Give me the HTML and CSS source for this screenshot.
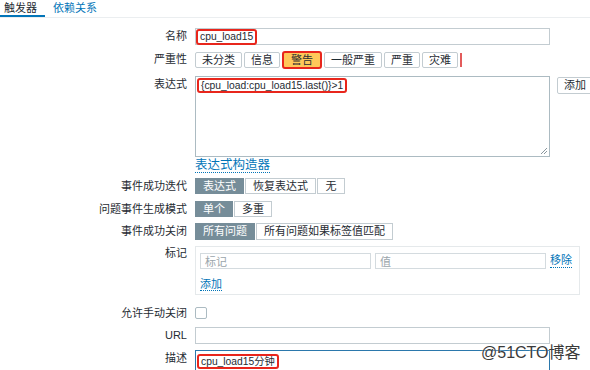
FILE: index.html
```html
<!DOCTYPE html>
<html lang="zh">
<head>
    <meta charset="UTF-8">
    <title>触发器</title>
    <link rel="stylesheet" href="styles.css">
</head>
<body>
    <div class="tabs">
        <span class="tab active">触发器</span>
        <span class="tab">依赖关系</span>
    </div>

    <div class="form">
        <div class="row">
            <div class="lbl">名称</div>
            <div class="input wide"><span class="mark">cpu_load15</span></div>
        </div>

        <div class="row">
            <div class="lbl">严重性</div>
            <div class="severity">
                <span class="sev-btn">未分类</span>
                <span class="sev-btn">信息</span>
                <span class="sev-btn warn">警告</span>
                <span class="sev-btn">一般严重</span>
                <span class="sev-btn">严重</span>
                <span class="sev-btn">灾难</span>
                <span class="red-bar"></span>
            </div>
        </div>

        <div class="row row-expr">
            <div class="lbl">表达式</div>
            <div class="expr-line">
                <div class="textarea">
                    <span class="mark">{cpu_load:cpu_load15.last()}&gt;1</span>
                    <svg class="grip" width="9" height="9" viewBox="0 0 9 9">
                        <path d="M8 2 L2 8 M8 5 L5 8" stroke="#8a979e" stroke-width="1"/>
                    </svg>
                </div>
                <span class="btn">添加</span>
            </div>
        </div>

        <div class="row row-builder">
            <div class="lbl"></div>
            <div><a class="link big">表达式构造器</a></div>
        </div>

        <div class="row">
            <div class="lbl">事件成功迭代</div>
            <div class="radio">
                <span class="opt on">表达式</span>
                <span class="opt">恢复表达式</span>
                <span class="opt">无</span>
            </div>
        </div>

        <div class="row row-mode">
            <div class="lbl">问题事件生成模式</div>
            <div class="radio">
                <span class="opt on">单个</span>
                <span class="opt">多重</span>
            </div>
        </div>

        <div class="row">
            <div class="lbl">事件成功关闭</div>
            <div class="radio tall">
                <span class="opt on">所有问题</span>
                <span class="opt">所有问题如果标签值匹配</span>
            </div>
        </div>

        <div class="row">
            <div class="lbl lbl-top">标记</div>
            <div class="tags">
                <div class="tag-line">
                    <span class="input tag-in ph">标记</span>
                    <span class="input tag-in ph">值</span>
                    <a class="link">移除</a>
                </div>
                <a class="link">添加</a>
            </div>
        </div>

        <div class="row row-check">
            <div class="lbl lbl-small">允许手动关闭</div>
            <div><span class="checkbox"></span></div>
        </div>

        <div class="row row-url">
            <div class="lbl">URL</div>
            <div class="input wide"></div>
        </div>

        <div class="row">
            <div class="lbl">描述</div>
            <div class="textarea focus">
                <span class="mark">cpu_load15分钟</span>
            </div>
        </div>
    </div>

    <div class="watermark">@51CTO博客</div>
</body>
</html>
```

FILE: styles.css
```css
body {
    margin: 0;
    width: 590px;
    height: 370px;
    overflow: hidden;
    position: relative;
    background-color: #ffffff;
    color: #1f2c33;
    font-family: "Liberation Sans", Arial, "Noto Sans CJK SC", sans-serif;
    font-size: 11px;
}
.tabs {
    display: flex;
    height: 17px;
    border-bottom: 1px solid #ebeef0;
}
.tab {
    padding: 1px 6px 0 4px;
    line-height: 14px;
    color: #0275b8;
    margin-right: 4px;
}
.tab.active {
    color: #1f2c33;
    border-bottom: 2px solid #0275b8;
    width: 35px;
}
.form {
    margin-top: 10px;
}
.row {
    display: grid;
    grid-template-columns: 187px 1fr;
    column-gap: 8px;
    margin-top: 6px;
}
.row-expr {
    margin-top: 7px;
}
.row-builder {
    margin-top: 2px;
}
.row-mode {
    margin-top: 7px;
}
.row-check {
    margin-top: 12px;
}
.row-url {
    margin-top: 8px;
}
.lbl {
    text-align: right;
    line-height: 16px;
    color: #1f2c33;
}
.lbl-top {
    line-height: 14px;
}
.lbl-small {
    line-height: 12px;
}
.input {
    box-sizing: border-box;
    height: 17px;
    border: 1px solid #c3ccd1;
    background-color: #ffffff;
    display: flex;
    align-items: center;
}
.input.wide {
    width: 355px;
}
.mark {
    display: inline-block;
    border: 2px solid #e8261c;
    border-radius: 3px;
    padding: 0 2px;
    font-size: 10.3px;
    line-height: 11px;
    color: #1f2c33;
    background-color: #ffffff;
}
.input .mark {
    line-height: 12px;
}
.severity {
    display: flex;
    gap: 2px;
    align-items: center;
}
.sev-btn {
    box-sizing: border-box;
    height: 16px;
    line-height: 14px;
    padding: 0 6px;
    border: 1px solid #c3ccd1;
    border-radius: 2px;
    background-color: #ffffff;
}
.sev-btn.warn {
    background-color: #ffc859;
    border: 2px solid #e8261c;
    border-radius: 3px;
    height: 18px;
    padding: 0 7px;
}
.red-bar {
    width: 2px;
    height: 14px;
    background-color: #e35b5b;
}
.expr-line {
    display: flex;
    gap: 7px;
    align-items: flex-start;
}
.textarea {
    box-sizing: border-box;
    position: relative;
    width: 355px;
    height: 81px;
    border: 1px solid #acbbc2;
    padding: 1px;
    background-color: #ffffff;
}
.textarea.focus {
    height: 40px;
    border-color: #2b78ac;
    padding: 3px 1px;
}
.grip {
    position: absolute;
    right: 1px;
    bottom: 1px;
}
.btn {
    box-sizing: border-box;
    height: 17px;
    line-height: 15px;
    margin-top: 1px;
    padding: 0 6px;
    border: 1px solid #c3ccd1;
    border-radius: 2px;
    white-space: nowrap;
}
.link {
    color: #0275b8;
    text-decoration: none;
    border-bottom: 1px dotted #0275b8;
    line-height: 13px;
}
.link.big {
    font-size: 12.5px;
}
.radio {
    display: flex;
    gap: 1px;
}
.opt {
    box-sizing: border-box;
    height: 16px;
    line-height: 14px;
    padding: 0 7px;
    min-width: 28px;
    text-align: center;
    border: 1px solid #c3ccd1;
    background-color: #ffffff;
}
.radio.tall .opt {
    height: 17px;
    line-height: 15px;
}
.opt.on {
    background-color: #768d99;
    border-color: #768d99;
    color: #ffffff;
}
.tags {
    box-sizing: border-box;
    width: 385px;
    height: 49px;
    border: 1px solid #e5e9eb;
    padding: 6px 4px 0;
}
.tag-line {
    display: flex;
    gap: 4px;
    align-items: center;
    margin-bottom: 9px;
}
.tag-in {
    width: 171px;
    height: 16px;
    padding-left: 4px;
    border: 1px solid #d4dbdf;
}
.ph {
    color: #9aa5ab;
}
.checkbox {
    display: block;
    box-sizing: border-box;
    width: 12px;
    height: 12px;
    border: 1px solid #acbbc2;
    border-radius: 2px;
}
.watermark {
    position: absolute;
    left: 481px;
    top: 343px;
    font-size: 16px;
    line-height: 20px;
    color: #3a3a3a;
    text-shadow: 0 0 2px #ffffff;
}
```
